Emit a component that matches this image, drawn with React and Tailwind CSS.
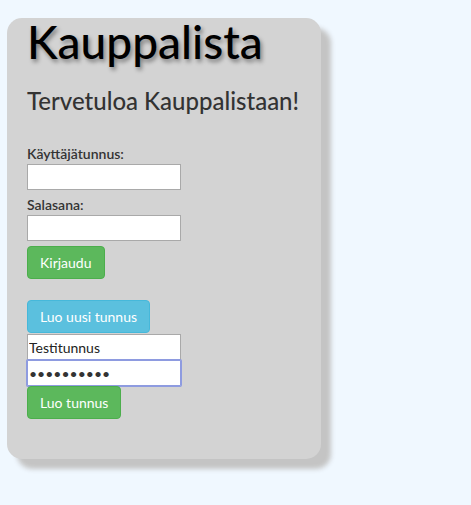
export default function App() {
  return (
    <div className="min-h-screen bg-[#f0f8ff] pt-[18px] pl-[7px] font-['Lato',sans-serif] text-[#333]">
      <div className="w-[314px] rounded-[15px] bg-[#d3d3d3] px-[20px] pb-[40px] shadow-[10px_10px_5px_#c4c4c4]">
        <h1 className="text-[46px] leading-[48px] font-medium text-black [text-shadow:2px_3px_4px_rgba(0,0,0,0.4)]">
          Kauppalista
        </h1>
        <h2 className="mt-[23px] text-[24px] leading-[24px] font-medium">Tervetuloa Kauppalistaan!</h2>

        {/* kirjautuminen */}
        <form className="mt-[31px]" onSubmit={(e) => e.preventDefault()}>
          <label className="block text-[14px] leading-[20px] font-semibold">Käyttäjätunnus:</label>
          <input
            type="text"
            className="block w-[154px] h-[26px] border border-[#a9a9a9] bg-white px-[2px] text-[14px] outline-none"
          />
          <label className="mt-[5px] block text-[14px] leading-[20px] font-semibold">Salasana:</label>
          <input
            type="password"
            className="block w-[154px] h-[26px] border border-[#a9a9a9] bg-white px-[2px] text-[14px] outline-none"
          />
          <button
            type="submit"
            className="mt-[5px] block h-[33px] rounded-[4px] border border-[#4cae4c] bg-[#5cb85c] px-[12px] text-[14px] text-white"
          >
            Kirjaudu
          </button>
        </form>

        {/* uusi tunnus */}
        <div className="mt-[21px]">
          <button
            type="button"
            className="block h-[33px] rounded-[4px] border border-[#46b8da] bg-[#5bc0de] px-[12px] text-[14px] text-white"
          >
            Luo uusi tunnus
          </button>
          <input
            type="text"
            defaultValue="Testitunnus"
            className="mt-[1px] block w-[154px] h-[26px] border border-[#a9a9a9] bg-white px-[1px] text-[14px] text-[#222] outline-none"
          />
          <input
            type="password"
            defaultValue="salasana12"
            className="block w-[154px] h-[26px] rounded-[1px] border border-[#8e9be0] bg-white px-[1px] text-[14px] text-[#333] outline-none ring-1 ring-[#8e9be0]"
          />
          <button
            type="button"
            className="block h-[33px] rounded-[4px] border border-[#4cae4c] bg-[#5cb85c] px-[12px] text-[14px] text-white"
          >
            Luo tunnus
          </button>
        </div>
      </div>
    </div>
  );
}
